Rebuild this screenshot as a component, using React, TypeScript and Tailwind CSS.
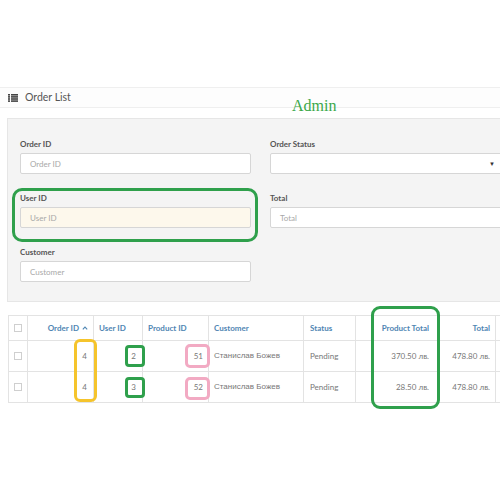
import React from "react";

const font = { fontFamily: "Lato, 'Open Sans', 'Liberation Sans', sans-serif" };

function Field({ label, placeholder, yellow, select }: { label?: string; placeholder?: string; yellow?: boolean; select?: boolean }) {
  if (!label) return <div />;
  return (
    <div className="flex flex-col">
      <div className="h-[10px] text-[8px] leading-[10px] font-bold text-[#555] mb-[4px]">{label}</div>
      <div
        className={`h-[21px] rounded-[2px] border border-[#d6d6d6] flex items-center pl-[9px] pr-[4px] text-[8px] text-[#a8a8a8] ${
          yellow ? "bg-[#fdf8ec]" : "bg-white"
        }`}
      >
        <span className="flex-1">{placeholder}</span>
        {select && <span className="text-[6px] text-[#333] mr-[5px]">▼</span>}
      </div>
    </div>
  );
}

function Check() {
  return <div className="w-[8px] h-[8px] border border-[#cfcfcf] bg-white mx-auto" />;
}

export default function App() {
  const th = "border border-[#e3e3e3] text-[8px] font-bold text-[#4f86b3] h-[25px]";
  const td = "border border-[#e3e3e3] text-[8px] text-[#777] h-[31px]";
  const rows = [
    { o: "4", u: "2", p: "51", pt: "370.50 лв.", t: "478.80 лв." },
    { o: "4", u: "3", p: "52", pt: "28.50 лв.", t: "478.80 лв." },
  ];
  return (
    <div className="relative w-[500px] h-[500px] overflow-hidden bg-white" style={font}>
      <div className="pt-[87px]">
        {/* header strip */}
        <div className="h-[21px] border-t border-b border-[#efefef] bg-[#fdfdfd] flex items-center pl-[8px]">
          <svg width="10" height="8" viewBox="0 0 10 8" className="mr-[7px]">
            <g fill="#444">
              <rect x="0" y="0" width="2" height="1.6" />
              <rect x="3" y="0" width="7" height="1.6" />
              <rect x="0" y="2.1" width="2" height="1.6" />
              <rect x="3" y="2.1" width="7" height="1.6" />
              <rect x="0" y="4.2" width="2" height="1.6" />
              <rect x="3" y="4.2" width="7" height="1.6" />
              <rect x="0" y="6.3" width="2" height="1.6" />
              <rect x="3" y="6.3" width="7" height="1.6" />
            </g>
          </svg>
          <span className="text-[10.5px] text-[#555]">Order List</span>
        </div>

        {/* filter panel */}
        <div className="mt-[10px] ml-[7px] w-[520px] bg-[#f4f4f4] border border-[#e6e6e6] pt-[20px] pb-[19px] pl-[12px]">
          <div className="grid grid-cols-[231px_235px] gap-x-[19px] gap-y-[19px]">
            <Field label="Order ID" placeholder="Order ID" />
            <Field label="Order Status" placeholder="" select />
            <Field label="User ID" placeholder="User ID" yellow />
            <Field label="Total" placeholder="Total" />
            <Field label="Customer" placeholder="Customer" />
            <div />
          </div>
        </div>

        {/* table */}
        <table className="mt-[13px] ml-[8px] border-collapse table-fixed w-[560px]">
          <colgroup>
            <col className="w-[19px]" />
            <col className="w-[66px]" />
            <col className="w-[49px]" />
            <col className="w-[66px]" />
            <col className="w-[95px]" />
            <col className="w-[52px]" />
            <col className="w-[82px]" />
            <col className="w-[58px]" />
            <col className="w-[73px]" />
          </colgroup>
          <thead>
            <tr>
              <th className={th}>
                <Check />
              </th>
              <th className={`${th} text-right pr-[5px]`}>
                <span className="inline-flex items-center gap-[3px]">
                  Order ID
                  <svg width="6" height="4" viewBox="0 0 6 4">
                    <path d="M0.8 3.3 L3 1 L5.2 3.3" fill="none" stroke="#4f86b3" strokeWidth="1.1" />
                  </svg>
                </span>
              </th>
              <th className={`${th} text-left pl-[5px]`}>User ID</th>
              <th className={`${th} text-left pl-[5px]`}>Product ID</th>
              <th className={`${th} text-left pl-[5px]`}>Customer</th>
              <th className={`${th} text-left pl-[6px]`}>Status</th>
              <th className={`${th} text-right pr-[8px]`}>Product Total</th>
              <th className={`${th} text-right pr-[5px]`}>Total</th>
              <th className={th}></th>
            </tr>
          </thead>
          <tbody>
            {rows.map((r, i) => (
              <tr key={i}>
                <td className={td}>
                  <Check />
                </td>
                <td className={`${td} text-right pr-[6px]`}>{r.o}</td>
                <td className={`${td} text-right pr-[6px]`}>{r.u}</td>
                <td className={`${td} text-right pr-[5px]`}>{r.p}</td>
                <td className={`${td} text-left pl-[5px] text-[#555]`} style={{ fontFamily: "'Liberation Sans', sans-serif" }}>
                  Станислав Божев
                </td>
                <td className={`${td} text-left pl-[6px]`}>Pending</td>
                <td className={`${td} text-right pr-[8px]`}>{r.pt}</td>
                <td className={`${td} text-right pr-[5px]`}>{r.t}</td>
                <td className={td}></td>
              </tr>
            ))}
          </tbody>
        </table>
      </div>

      {/* annotations */}
      <div
        className="absolute left-[292px] top-[97px] text-[16px] leading-[18px] text-[#3aa84a]"
        style={{ fontFamily: "'Liberation Serif', serif" }}
      >
        Admin
      </div>
      <div className="absolute left-[12px] top-[188px] w-[246px] h-[54px] rounded-[10px] border-[3px] border-[#2fa04c]" />
      <div className="absolute left-[371px] top-[306px] w-[69px] h-[103px] rounded-[9px] border-[3px] border-[#2fa04c]" />
      <div className="absolute left-[74px] top-[339px] w-[23px] h-[63px] rounded-[6px] border-[3px] border-[#f5c42c]" />
      <div className="absolute left-[125px] top-[345px] w-[20px] h-[22px] rounded-[4px] border-[3px] border-[#2fa04c]" />
      <div className="absolute left-[125px] top-[377px] w-[20px] h-[21px] rounded-[4px] border-[3px] border-[#2fa04c]" />
      <div className="absolute left-[185px] top-[344px] w-[25px] h-[24px] rounded-[5px] border-[3px] border-[#f2aac3]" />
      <div className="absolute left-[185px] top-[377px] w-[25px] h-[23px] rounded-[5px] border-[3px] border-[#f2aac3]" />
    </div>
  );
}
